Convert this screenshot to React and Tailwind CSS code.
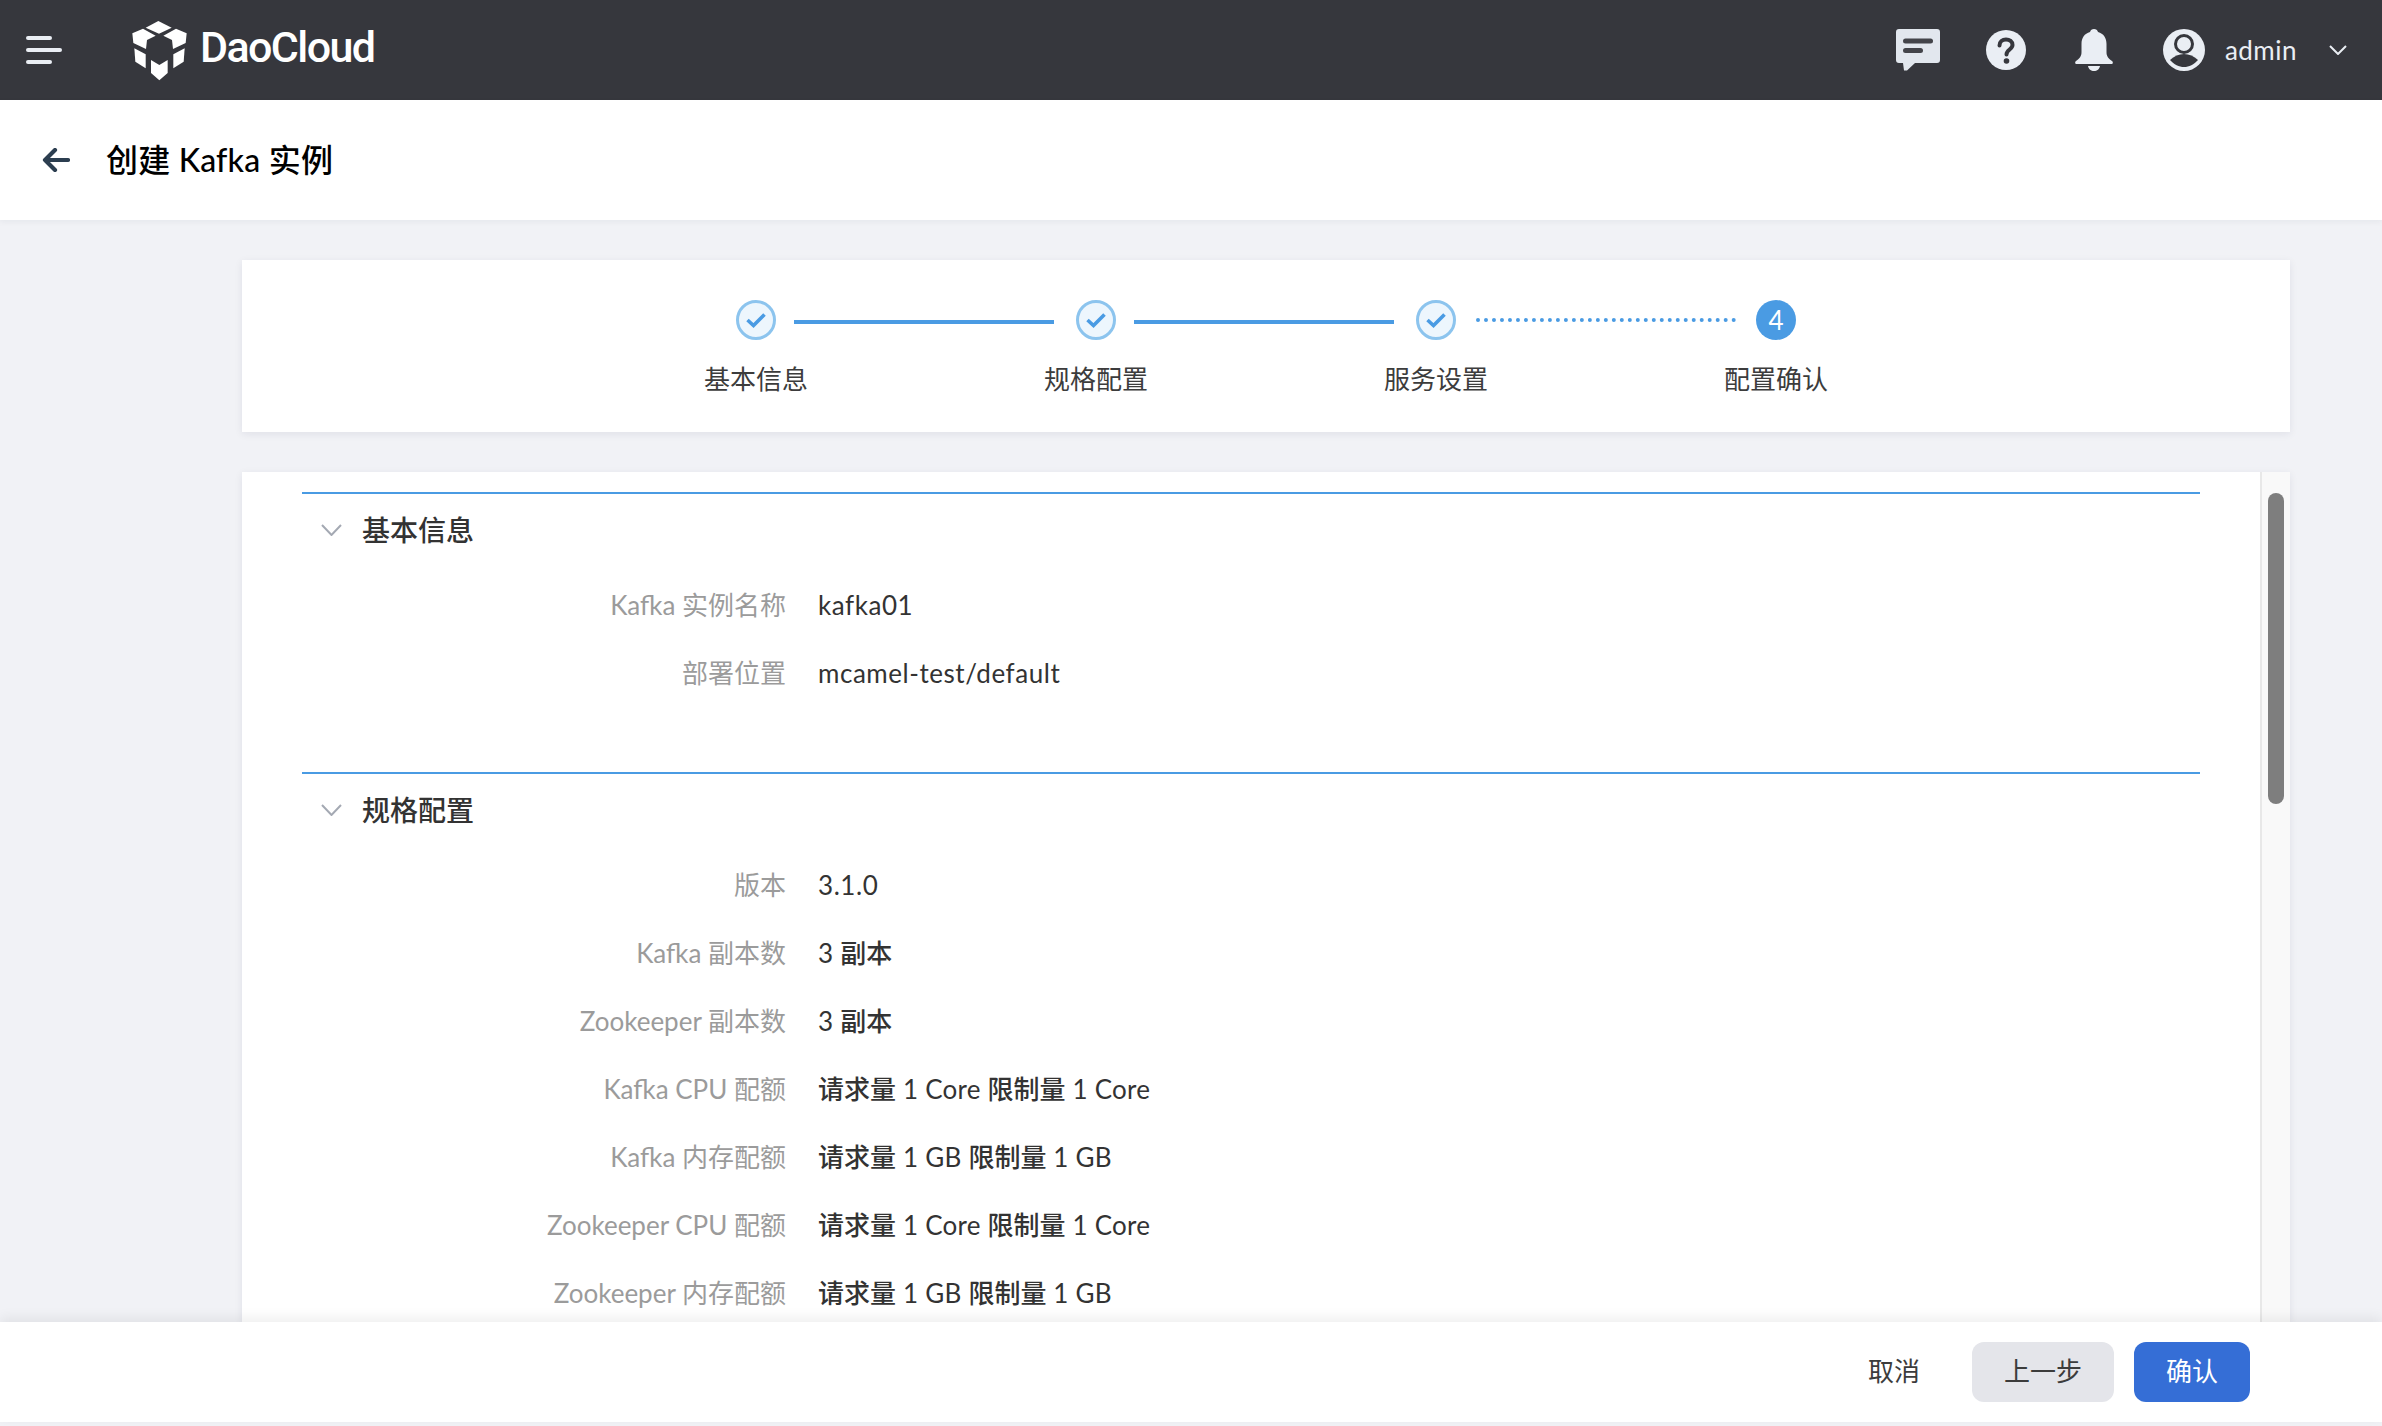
const font = "font-['Lato','Noto_Sans_CJK_SC',sans-serif]";

const basicRows = [
  { label: 'Kafka 实例名称', value: [['kafka01']], wide: true },
  { label: '部署位置', value: [['mcamel-test/default']], wide: true },
];

const specRows = [
  { label: '版本', value: [['3.1.0']], wide: true },
  { label: 'Kafka 副本数', value: [['3 '], ['副本', 1]] },
  { label: 'Zookeeper 副本数', value: [['3 '], ['副本', 1]] },
  { label: 'Kafka CPU 配额', value: [['请求量', 1], [' 1 Core '], ['限制量', 1], [' 1 Core']] },
  { label: 'Kafka 内存配额', value: [['请求量', 1], [' 1 GB '], ['限制量', 1], [' 1 GB']] },
  { label: 'Zookeeper CPU 配额', value: [['请求量', 1], [' 1 Core '], ['限制量', 1], [' 1 Core']] },
  { label: 'Zookeeper 内存配额', value: [['请求量', 1], [' 1 GB '], ['限制量', 1], [' 1 GB']] },
];

const steps = ['基本信息', '规格配置', '服务设置', '配置确认'];

function Logo() {
  return (
    <svg viewBox="0 0 210 210" className="w-[70px] h-[70px]" fill="#fff">
      <path d="M62 38 100 18 140 38 102 56Z" />
      <path d="M22 55 54 41 92 62 66 75 63 102 25 84Z" />
      <path d="M185 55 153 41 115 62 141 75 144 102 182 84Z" />
      <path d="M28 100 62 118 62 160 31 140Z" />
      <path d="M179 100 145 118 145 160 176 140Z" />
      <path d="M78 135 103 150 128 135 128 174 103 196 78 174Z" />
    </svg>
  );
}

function TopBar() {
  return (
    <header className="h-[100px] shrink-0 bg-[#36373d] flex items-center text-[#eaeef4]">
      <div className="ml-[26px] w-[36px] flex flex-col gap-[8px]">
        <div className="h-[4px] w-[26px] rounded-full bg-[#eaeef4]" />
        <div className="h-[4px] w-[36px] rounded-full bg-[#eaeef4]" />
        <div className="h-[4px] w-[26px] rounded-full bg-[#eaeef4]" />
      </div>
      <div className="ml-[63px] flex items-center gap-[5px]">
        <Logo />
        <span className="-mt-[6px] font-['Roboto',sans-serif] font-medium text-[43px] leading-none text-white tracking-[-1.6px]">DaoCloud</span>
      </div>
      <div className="ml-auto flex items-center">
        <svg viewBox="0 0 44 42" className="w-[44px] h-[42px]">
          <path fill="#e2e7ee" d="M3 0H41A3 3 0 0 1 44 3V31A3 3 0 0 1 41 34H19L11 41.5H8L7 34H3A3 3 0 0 1 0 31V3A3 3 0 0 1 3 0Z" />
          <rect x="7" y="9.5" width="30" height="5" rx="2.5" fill="#43444a" />
          <rect x="7" y="19" width="20" height="5" rx="2.5" fill="#43444a" />
        </svg>
        <svg viewBox="0 0 40 40" className="ml-[46px] w-[40px] h-[40px]">
          <circle cx="20" cy="20" r="20" fill="#eaeef4" />
          <path d="M13.5 15.5C13.5 11.5 16.5 9.5 20 9.5 23.5 9.5 26.5 11.5 26.5 15 26.5 19.5 20.5 19.5 20.5 24.5" fill="none" stroke="#36373d" strokeWidth="4" strokeLinecap="round" />
          <circle cx="20.5" cy="31" r="2.8" fill="#36373d" />
        </svg>
        <svg viewBox="0 0 38 42" className="ml-[49px] w-[38px] h-[42px]">
          <path fill="#eaeef4" d="M19 0C21 0 22.5 1 23 3 28.5 4.5 31.5 9 31.5 15V23C31.5 27 33 29 37 32 38.5 33.5 38 35 36 35H2C0 35 -.5 33.5 1 32 5 29 6.5 27 6.5 23V15C6.5 9 9.5 4.5 15 3 15.5 1 17 0 19 0Z" />
          <path fill="#eaeef4" d="M13 37H25C24.5 40 22 42 19 42 16 42 13.5 40 13 37Z" />
        </svg>
        <svg viewBox="0 0 42 42" className="ml-[50px] w-[42px] h-[42px]">
          <circle cx="21" cy="21" r="21" fill="#eaeef4" />
          <circle cx="21" cy="15" r="8.5" fill="none" stroke="#36373d" strokeWidth="3" />
          <path fill="#36373d" d="M7 31C11 27 16 25 21 25 26 25 31 27 35 31 31 35.5 26 38 21 38 16 38 11 35.5 7 31Z" />
        </svg>
        <span className={`ml-[20px] text-[26px] leading-none tracking-[0.5px] ${font}`}>admin</span>
        <svg viewBox="0 0 18 10" className="ml-[32px] mr-[35px] w-[18px] h-[10px]">
          <path d="M1 1 9 9 17 1" fill="none" stroke="#eaeef4" strokeWidth="2" />
        </svg>
      </div>
    </header>
  );
}

function Stepper() {
  return (
    <section className="h-[172px] shrink-0 bg-white shadow-[0_2px_8px_rgba(20,30,60,0.08)] pt-[40px] flex flex-col items-center">
      <div className="flex items-start h-[40px]">
        {steps.slice(0, 3).map((s, i) => (
          <div key={s} className="flex items-start">
            <div className="w-[40px] h-[40px] rounded-full border-[3px] border-[#8cc4ee] bg-[#edf6fd] flex items-center justify-center">
              <svg viewBox="0 0 20 16" className="w-[20px] h-[16px]">
                <path d="M1.5 8 7.5 13.5 18.5 2.5" fill="none" stroke="#4a9be3" strokeWidth="3.6" />
              </svg>
            </div>
            {i < 2 ? (
              <div className="ml-[18px] mr-[22px] mt-[20px] w-[260px] h-[4px] bg-[#4a9be3]" />
            ) : (
              <div className="ml-[20px] mr-[20px] mt-[18px] w-[260px] border-t-[4px] border-dotted border-[#4a9be3]" />
            )}
          </div>
        ))}
        <div className={`w-[40px] h-[40px] rounded-full bg-[#4a9be3] text-white text-[26px] leading-none flex items-center justify-center ${font}`}>4</div>
      </div>
      <div className={`mt-[20px] grid grid-cols-4 w-[1360px] ${font} text-[26px] leading-[38px] text-[#3c3c3c] text-center`}>
        {steps.map((s) => (
          <div key={s}>{s}</div>
        ))}
      </div>
    </section>
  );
}

function Section({ title, rows, last }) {
  return (
    <section className={`border-t-2 border-[#4a9be3] ${last ? '' : 'pb-[66px]'}`}>
      <div className="h-[76px] pb-[4px] flex items-center">
        <svg viewBox="0 0 21 12" className="ml-[19px] w-[21px] h-[12px]">
          <path d="M1 1 10.5 11 20 1" fill="none" stroke="#a4a9b3" strokeWidth="2" />
        </svg>
        <h2 className="ml-[20px] text-[28px] font-medium text-[#333]">{title}</h2>
      </div>
      {rows.map((row) => (
        <div key={row.label} className="h-[68px] pt-[2px] flex items-center text-[26px]">
          <div className="w-[484px] text-right text-[#9b9b9b]">{row.label}</div>
          <div className="ml-[32px] text-[#333] whitespace-pre">
            {row.value.map(([text, strong], i) => (
              <span key={i} className={strong ? 'font-medium' : row.wide ? 'tracking-[0.55px]' : 'tracking-[0.25px]'}>{text}</span>
            ))}
          </div>
        </div>
      ))}
    </section>
  );
}

export default function App() {
  return (
    <div className={`h-[1426px] overflow-hidden flex flex-col bg-[#f1f2f6] ${font}`}>
      <TopBar />
      <div className="h-[120px] shrink-0 bg-white shadow-[0_2px_6px_rgba(20,30,60,0.05)] flex items-center">
        <svg viewBox="0 0 28 24" className="ml-[42px] w-[28px] h-[24px]">
          <path d="M26 12H3M13 2 3 12 13 22" fill="none" stroke="#2c3e50" strokeWidth="4.2" strokeLinecap="round" strokeLinejoin="round" />
        </svg>
        <h1 className="ml-[36px] pb-[1px] text-[32px] font-medium text-black tracking-[0.2px]">创建 Kafka 实例</h1>
      </div>
      <main className="flex-1 min-h-0 w-[2382px] pl-[242px] pr-[92px] pt-[40px] flex flex-col gap-[40px]">
        <Stepper />
        <div className="flex-1 min-h-0 flex bg-white shadow-[0_2px_8px_rgba(20,30,60,0.08)]">
          <div className="flex-1 min-w-0 overflow-hidden pt-[20px] pl-[60px] pr-[60px]">
            <Section title="基本信息" rows={basicRows} />
            <Section title="规格配置" rows={specRows} last />
          </div>
          <div className="w-[30px] shrink-0 border-l-2 border-[#e8e8e8] bg-[#f9f9f9] pt-[21px] pl-[6px]">
            <div className="w-[16px] h-[311px] rounded-full bg-[#7e7e7e]" />
          </div>
        </div>
      </main>
      <footer className="h-[100px] shrink-0 mb-[4px] bg-white shadow-[0_-4px_12px_rgba(0,0,0,0.07)] relative flex items-center justify-end gap-[20px] pr-[132px] text-[26px]">
        <button className="h-[60px] w-[116px] pb-[2px] text-[#3c3c3c]">取消</button>
        <button className="h-[60px] w-[142px] pb-[2px] rounded-[12px] bg-[#e4e5ea] text-[#3c3c3c]">上一步</button>
        <button className="h-[60px] w-[116px] pb-[2px] rounded-[12px] bg-[#356ed6] text-white">确认</button>
      </footer>
    </div>
  );
}
